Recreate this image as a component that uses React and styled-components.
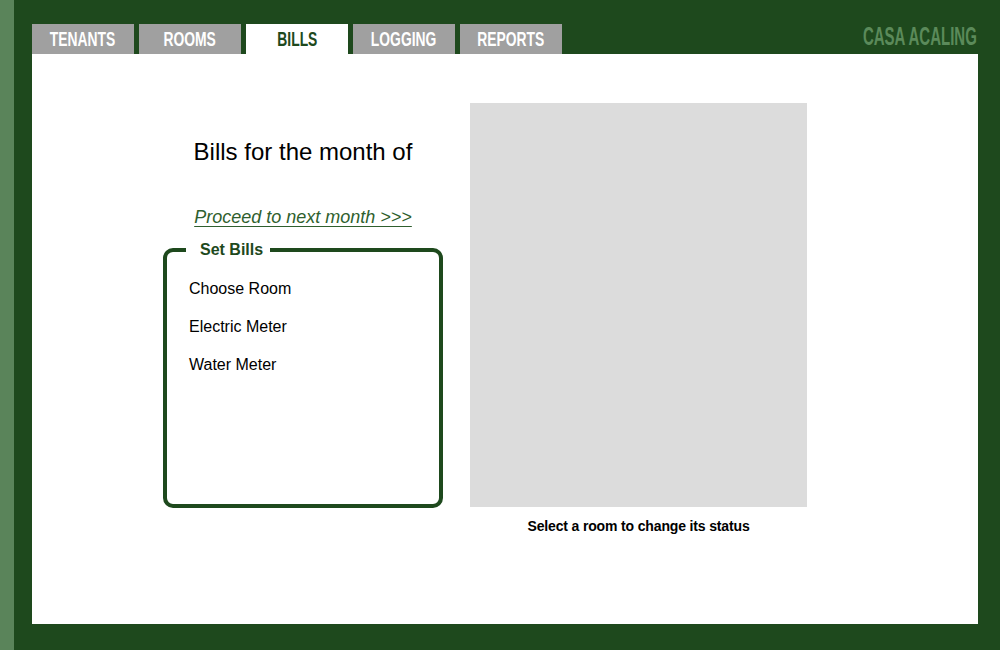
import React from "react";
import styled, { createGlobalStyle } from "styled-components";

const darkGreen = "#1e491d";

const GlobalStyle = createGlobalStyle`
  html, body {
    margin: 0;
    padding: 0;
    background: ${darkGreen};
    font-family: "Liberation Sans", Arial, sans-serif;
  }
  * {
    box-sizing: border-box;
  }
`;

const Page = styled.div`
  display: flex;
  width: 1000px;
  height: 650px;
  background: ${darkGreen};
`;

const SideStrip = styled.div`
  width: 14px;
  flex-shrink: 0;
  background: #5a845a;
`;

const Main = styled.div`
  flex: 1;
  display: flex;
  flex-direction: column;
  padding: 24px 22px 26px 18px;
`;

const Header = styled.div`
  display: flex;
  justify-content: space-between;
  align-items: flex-start;
  height: 30px;
`;

const Tabs = styled.nav`
  display: flex;
  gap: 5px;
`;

const Tab = styled.div`
  width: 102px;
  height: 30px;
  line-height: 30px;
  text-align: center;
  background: ${(p) => (p.$active ? "#ffffff" : "#a0a0a0")};
  color: ${(p) => (p.$active ? darkGreen : "#ffffff")};
  font-size: 21px;
  font-weight: bold;
  cursor: pointer;
  overflow: hidden;
`;

const Squeeze = styled.span`
  display: inline-block;
  flex-shrink: 0;
  transform: scaleX(${(p) => p.$k});
  transform-origin: ${(p) => p.$origin || "center"};
  white-space: nowrap;
`;

const Brand = styled.div`
  display: flex;
  justify-content: flex-end;
  width: 120px;
  margin-right: 1px;
  font-size: 25px;
  line-height: 24px;
  font-weight: bold;
  color: #5b8a5a;
`;

const Panel = styled.main`
  background: #ffffff;
  width: 946px;
  height: 570px;
  display: flex;
  align-items: flex-start;
  gap: 27px;
  padding: 49px 0 0 131px;
`;

const LeftColumn = styled.section`
  width: 280px;
  display: flex;
  flex-direction: column;
  align-items: center;
`;

const Title = styled.h1`
  margin: 35px 0 0;
  font-size: 24px;
  line-height: 28px;
  font-weight: normal;
  color: #000;
`;

const ProceedLink = styled.a`
  margin-top: 41px;
  font-size: 18px;
  line-height: 21px;
  font-style: italic;
  color: #2f5f2e;
  text-decoration: underline;
  text-underline-offset: 3px;
  text-decoration-thickness: 1px;
  cursor: pointer;
`;

const BillsBox = styled.fieldset`
  align-self: stretch;
  margin: 13px 0 0;
  height: 267px;
  border: 4px solid ${darkGreen};
  border-radius: 10px;
  padding: 21px 20px 0 22px;
  min-inline-size: 0;
`;

const BoxLegend = styled.legend`
  margin-left: -3px;
  padding: 0 7px 0 14px;
  font-size: 16px;
  line-height: 18px;
  font-weight: bold;
  color: ${darkGreen};
`;

const Field = styled.div`
  font-size: 16px;
  line-height: 18px;
  color: #000;
  margin-bottom: 20px;
`;

const RightColumn = styled.section`
  width: 337px;
  display: flex;
  flex-direction: column;
`;

const RoomMap = styled.div`
  height: 404px;
  background: #dcdcdc;
`;

const Caption = styled.p`
  margin: 12px 0 0;
  font-size: 14px;
  line-height: 15px;
  font-weight: bold;
  letter-spacing: -0.15px;
  text-align: center;
  color: #000;
`;

const tabs = ["TENANTS", "ROOMS", "BILLS", "LOGGING", "REPORTS"];
const fields = ["Choose Room", "Electric Meter", "Water Meter"];

export default function App() {
  return (
    <>
      <GlobalStyle />
      <Page>
        <SideStrip />
        <Main>
          <Header>
            <Tabs>
              {tabs.map((t) => (
                <Tab key={t} $active={t === "BILLS"}>
                  <Squeeze $k={0.66}>{t}</Squeeze>
                </Tab>
              ))}
            </Tabs>
            <Brand>
              <Squeeze $k={0.6} $origin="right">
                CASA ACALING
              </Squeeze>
            </Brand>
          </Header>
          <Panel>
            <LeftColumn>
              <Title>Bills for the month of</Title>
              <ProceedLink>Proceed to next month &gt;&gt;&gt;</ProceedLink>
              <BillsBox>
                <BoxLegend>Set Bills</BoxLegend>
                {fields.map((f) => (
                  <Field key={f}>{f}</Field>
                ))}
              </BillsBox>
            </LeftColumn>
            <RightColumn>
              <RoomMap />
              <Caption>Select a room to change its status</Caption>
            </RightColumn>
          </Panel>
        </Main>
      </Page>
    </>
  );
}
